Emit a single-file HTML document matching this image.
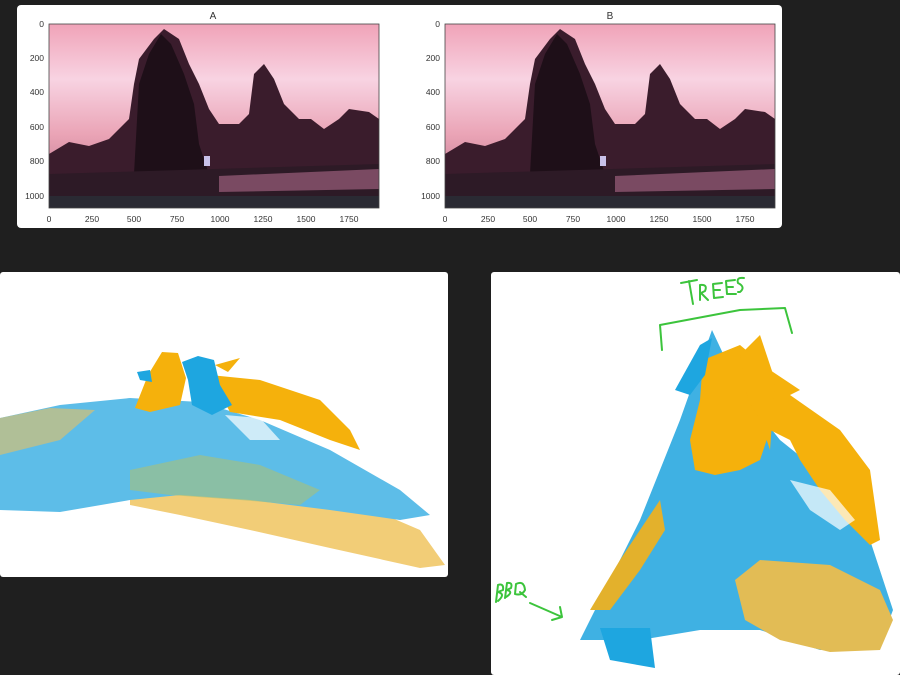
<!DOCTYPE html>
<html><head><meta charset="utf-8"><style>
html,body{margin:0;padding:0;background:#1f1f1f;width:900px;height:675px;overflow:hidden}
svg{display:block}
text{font-family:"Liberation Sans",sans-serif}
</style></head><body>
<svg width="900" height="675" viewBox="0 0 900 675" xmlns="http://www.w3.org/2000/svg">
<defs>
<linearGradient id="sky" x1="0" y1="0" x2="0" y2="1">
<stop offset="0" stop-color="#f0a3b8"/><stop offset="0.3" stop-color="#f8d3e2"/><stop offset="0.6" stop-color="#eaa4b6"/><stop offset="1" stop-color="#b06a85"/>
</linearGradient>
<g id="scene">
<rect x="0" y="0" width="330" height="184" fill="url(#sky)"/>
<path d="M0,130 L20,118 L40,122 L60,115 L70,105 L80,95 L85,60 L90,35 L105,15 L115,5 L130,15 L140,40 L150,60 L160,85 L170,100 L190,100 L200,90 L205,50 L215,40 L225,55 L235,80 L250,95 L262,95 L275,105 L290,95 L300,85 L320,88 L330,95 L330,184 L0,184Z" fill="#3a1c2c"/>
<path d="M85,150 L90,60 L100,30 L112,10 L122,20 L135,50 L145,80 L150,120 L160,150Z" fill="#1e0f18"/>
<path d="M0,150 L330,140 L330,184 L0,184Z" fill="#2d1a26"/>
<path d="M170,152 L330,145 L330,165 L170,168Z" fill="#7a4a62"/>
<rect x="0" y="172" width="330" height="12" fill="#2a2a33"/>
<rect x="155" y="132" width="6" height="10" fill="#c8c0e8"/>
</g>
</defs>
<rect x="17" y="5" width="765" height="223" rx="4" fill="#fff"/>
<g font-size="9" fill="#333">
<text x="213" y="19" font-size="10" text-anchor="middle">A</text>
<text x="610" y="19" font-size="10" text-anchor="middle">B</text>
</g>
<use href="#scene" x="49" y="24"/>
<g transform="translate(445,24)"><use href="#scene"/></g>
<rect x="49" y="24" width="330" height="184" fill="none" stroke="#444" stroke-width="0.8"/>
<rect x="445" y="24" width="330" height="184" fill="none" stroke="#444" stroke-width="0.8"/>
<g font-size="8.5" fill="#333" text-anchor="end">
<text x="44" y="27">0</text><text x="44" y="61">200</text><text x="44" y="95">400</text><text x="44" y="130">600</text><text x="44" y="164">800</text><text x="44" y="199">1000</text>
<text x="440" y="27">0</text><text x="440" y="61">200</text><text x="440" y="95">400</text><text x="440" y="130">600</text><text x="440" y="164">800</text><text x="440" y="199">1000</text>
</g>
<g font-size="8.5" fill="#333" text-anchor="middle">
<text x="49" y="222">0</text><text x="92" y="222">250</text><text x="134" y="222">500</text><text x="177" y="222">750</text><text x="220" y="222">1000</text><text x="263" y="222">1250</text><text x="306" y="222">1500</text><text x="349" y="222">1750</text>
<text x="445" y="222">0</text><text x="488" y="222">250</text><text x="530" y="222">500</text><text x="573" y="222">750</text><text x="616" y="222">1000</text><text x="659" y="222">1250</text><text x="702" y="222">1500</text><text x="745" y="222">1750</text>
</g>
<!-- bottom left -->
<rect x="0" y="272" width="448" height="305" rx="3" fill="#fff"/>
<path d="M130,480 L250,470 L350,500 L420,530 L445,565 L420,568 L330,548 L250,530 L180,515 L130,505Z" fill="#f2cd77"/>
<path d="M0,418 L60,405 L130,398 L200,402 L260,420 L330,450 L400,490 L430,515 L400,520 L330,510 L250,500 L180,495 L130,500 L60,512 L0,510Z" fill="#5dbde8"/>
<path d="M130,470 L200,455 L260,465 L320,490 L300,505 L240,500 L170,495 L130,490Z" fill="#a9bf78" opacity="0.6"/>
<path d="M0,418 L50,408 L95,410 L60,440 L0,455Z" fill="#e8c060" opacity="0.6"/>
<path d="M210,375 L260,380 L320,400 L350,430 L360,450 L330,440 L280,420 L230,412Z" fill="#f5b10c"/>
<path d="M225,415 L260,418 L280,440 L250,440Z" fill="#fff" opacity="0.7"/>
<path d="M135,408 L148,375 L162,352 L178,353 L186,378 L180,405 L150,412Z" fill="#f5b10c"/>
<path d="M137,372 L150,370 L152,382 L140,380Z" fill="#1ea6e0"/>
<path d="M182,362 L198,356 L214,360 L220,385 L232,405 L212,415 L192,405 L188,380Z" fill="#1ea6e0"/>
<path d="M215,365 L240,358 L228,372Z" fill="#f5b10c"/>
<!-- bottom right -->
<rect x="491" y="272" width="409" height="403" rx="3" fill="#fff"/>
<path d="M580,640 L640,520 L680,420 L712,330 L740,390 L780,440 L830,480 L870,540 L893,610 L880,645 L820,650 L760,630 L700,630 L640,640Z" fill="#3fb1e3"/>
<path d="M760,560 L830,565 L880,590 L893,620 L880,650 L830,652 L780,640 L745,620 L735,580Z" fill="#e2bc55"/>
<path d="M703,360 L740,345 L770,370 L800,390 L790,395 L840,430 L870,470 L880,540 L870,545 L845,520 L820,490 L800,460 L790,440 L770,430 L760,460 L740,470 L715,475 L695,470 L690,440 L700,400Z" fill="#f5b10c"/>
<path d="M740,355 L760,335 L775,380 L770,450 L760,420 L748,400Z" fill="#f5b10c"/>
<path d="M590,610 L620,560 L660,500 L665,530 L640,570 L610,610Z" fill="#e3b12c"/>
<path d="M675,390 L700,345 L712,338 L705,375 L690,395Z" fill="#1ea6e0"/>
<path d="M790,480 L830,490 L855,520 L840,530 L810,510Z" fill="#fff" opacity="0.7"/>
<path d="M600,628 L650,628 L655,668 L610,660Z" fill="#1ea6e0"/>
<g fill="none" stroke="#3cc43c" stroke-width="2" stroke-linecap="round" stroke-linejoin="round">
<path d="M662,350 L660,325 L740,310 L785,308 L792,333"/>
<path d="M681,283 L697,280 M689,281 L693,304 M700,300 L700,285 Q708,284 705,291 L701,293 L708,300 M722,283 L713,284 L714,298 L723,297 M714,290 L720,290 M735,280 L726,281 L727,294 L736,294 M727,287 L733,287 M744,278 Q736,277 738,283 Q746,287 740,292 L738,292"/>
<path d="M496,602 L498,585 Q504,583 503,590 L498,592 Q506,594 498,601 M505,598 L507,583 Q513,582 511,588 L507,590 Q514,592 506,597 M516,584 Q524,580 525,590 Q522,596 515,594 Z M520,592 L526,597"/>
<path d="M530,603 L562,617 M552,620 L562,617 L560,607"/>
</g>
</svg>
</body></html>
